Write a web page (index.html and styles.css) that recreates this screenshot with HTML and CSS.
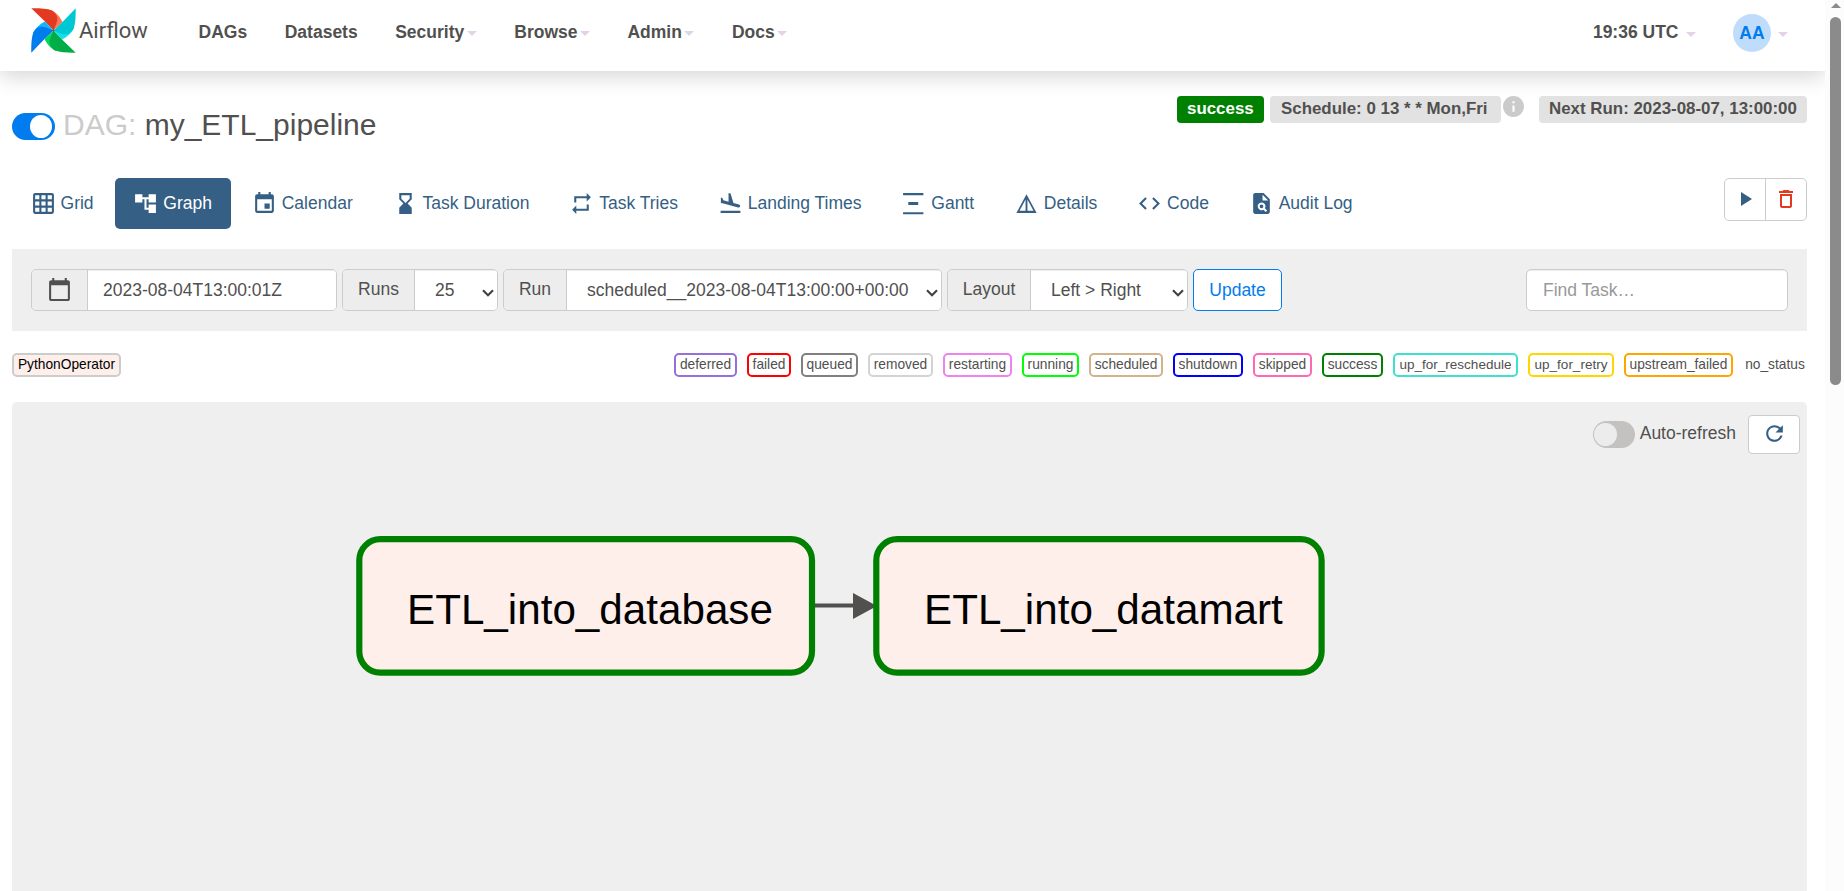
FILE: index.html
```html
<!DOCTYPE html>
<html lang="en">
<head>
<meta charset="utf-8">
<title>my_ETL_pipeline - Graph - Airflow</title>
<link rel="stylesheet" href="styles.css">
</head>
<body>
<div class="page">
<header class="navbar">
  <a class="brand">
    <svg class="brand-logo" viewBox="0 0 45 45">
      <g><path fill="#ff7557" d="M20 2C26 5 29 9 31.500 14L22.500 22.500z"/><path fill="#e43921" d="M.3.300C8 .2 16 .5 21 2.500 26 6 27.500 10 25.500 15c-1 3-2 5-3 7.500L14 13.500z"/></g>
      <g transform="rotate(90 22.500 22.500)"><path fill="#11e1ee" d="M20 2C26 5 29 9 31.500 14L22.500 22.500z"/><path fill="#00c7d4" d="M.3.300C8 .2 16 .5 21 2.500 26 6 27.500 10 25.500 15c-1 3-2 5-3 7.500L14 13.500z"/></g>
      <g transform="rotate(180 22.500 22.500)"><path fill="#04d659" d="M20 2C26 5 29 9 31.500 14L22.500 22.500z"/><path fill="#00ad46" d="M.3.300C8 .2 16 .5 21 2.500 26 6 27.500 10 25.500 15c-1 3-2 5-3 7.500L14 13.500z"/></g>
      <g transform="rotate(270 22.500 22.500)"><path fill="#11b5ff" d="M20 2C26 5 29 9 31.500 14L22.500 22.500z"/><path fill="#017cee" d="M.3.300C8 .2 16 .5 21 2.500 26 6 27.500 10 25.500 15c-1 3-2 5-3 7.500L14 13.500z"/></g>
      <circle cx="22.500" cy="22.500" r=".9" fill="#51504f"/>
    </svg>
    <span class="brand-name">Airflow</span>
  </a>
  <nav class="menu">
    <a>DAGs</a><a>Datasets</a><a>Security<i class="caret"></i></a><a>Browse<i class="caret"></i></a><a>Admin<i class="caret"></i></a><a>Docs<i class="caret"></i></a>
  </nav>
  <div class="account">
    <span class="clock">19:36 UTC<i class="caret"></i></span>
    <span class="avatar">AA</span><i class="caret"></i>
  </div>
</header>

<main class="content">
  <section class="heading">
    <h3 class="title"><span class="switch on"></span><span class="muted">DAG:</span> my_ETL_pipeline</h3>
    <div class="labels">
      <span class="label ok">success</span>
      <span class="label schedule">Schedule: 0 13 * * Mon,Fri</span>
      <svg class="info" viewBox="2 2 20 20"><path d="M12 2C6.480 2 2 6.480 2 12s4.480 10 10 10 10-4.480 10-10S17.520 2 12 2zm1 15h-2v-6h2v6zm0-8h-2V7h2v2z"/></svg>
      <span class="label next">Next Run: 2023-08-07, 13:00:00</span>
    </div>
  </section>

  <section class="tabs-row">
    <ul class="tabs">
      <li><svg viewBox="0 0 24 24"><path d="M20 2H4c-1.100 0-2 .9-2 2v16c0 1.100.9 2 2 2h16c1.100 0 2-.9 2-2V4c0-1.100-.9-2-2-2zM8 20H4v-4h4v4zm0-6H4v-4h4v4zm0-6H4V4h4v4zm6 12h-4v-4h4v4zm0-6h-4v-4h4v4zm0-6h-4V4h4v4zm6 12h-4v-4h4v4zm0-6h-4v-4h4v4zm0-6h-4V4h4v4z"/></svg>Grid</li>
      <li class="active"><svg viewBox="0 0 24 24"><path d="M22 11V3h-7v3H9V3H2v8h7V8h2v10h4v3h7v-8h-7v3h-2V8h2v3z"/></svg>Graph</li>
      <li><svg viewBox="0 0 24 24"><path d="M17 12h-5v5h5v-5zM16 1v2H8V1H6v2H5c-1.110 0-1.990.9-1.990 2L3 19c0 1.100.89 2 2 2h14c1.100 0 2-.9 2-2V5c0-1.100-.9-2-2-2h-1V1h-2zm3 18H5V8h14v11z"/></svg>Calendar</li>
      <li><svg viewBox="0 0 24 24"><path d="M18 22 17.990 16 14 12l3.990-4.010L18 2H6v6l4 4-4 3.990V22h12zM8 7.500V4h8v3.500l-4 4-4-4z"/></svg>Task Duration</li>
      <li><svg viewBox="0 0 24 24"><path d="M7 7h10v3l4-4-4-4v3H5v6h2V7zm10 10H7v-3l-4 4 4 4v-3h12v-6h-2v4z"/></svg>Task Tries</li>
      <li><svg viewBox="0 0 24 24"><path d="M2.500 19h19v2h-19zm7.180-5.730 4.350 1.160 5.310 1.420c.8.210 1.620-.26 1.840-1.060.21-.8-.26-1.620-1.060-1.840l-5.310-1.420-2.760-9.020L10.120 2v8.280L5.150 8.950l-.93-2.320-1.450-.39v5.170l1.600.43 5.310 1.430z"/></svg>Landing Times</li>
      <li><svg viewBox="0 0 24 24"><path d="M2 2h19.500v2H2zM7 10.500h9.500v3H7zM2 20.300h19.500v2H2z"/></svg>Gantt</li>
      <li><svg viewBox="0 0 24 24"><path fill-rule="evenodd" d="M12 3 2.300 21h19.400zm-.9 5.200V19H5.300zm1.800 0L18.700 19h-5.800z"/></svg>Details</li>
      <li><svg viewBox="0 0 24 24"><path d="M9.400 16.600 4.800 12l4.600-4.600L8 6l-6 6 6 6 1.400-1.400zm5.200 0 4.600-4.600-4.600-4.600L16 6l6 6-6 6-1.400-1.400z"/></svg>Code</li>
      <li><svg viewBox="0 0 24 24"><path fill-rule="evenodd" d="M14 2H6c-1.100 0-2 .9-2 2v16c0 1.100.9 2 2 2h12c1.100 0 2-.9 2-2V8zM13 9V3.500L18.500 9zM12 11a3.700 3.700 0 1 0 1.900 6.900l2.200 2.200 1.300-1.300-2.100-2.200A3.700 3.700 0 0 0 12 11zm0 1.900a1.800 1.800 0 1 1 0 3.600 1.800 1.800 0 0 1 0-3.600z"/></svg>Audit Log</li>
    </ul>
    <div class="actions">
      <span class="action run"><svg viewBox="0 0 24 24"><path d="M8 5v14l11-7z"/></svg></span>
      <span class="action delete"><svg viewBox="0 0 24 24"><path d="M6 19c0 1.100.9 2 2 2h8c1.100 0 2-.9 2-2V7H6v12zM8 9h8v10H8V9zm7.500-5-1-1h-5l-1 1H5v2h14V4z"/></svg></span>
    </div>
  </section>

  <section class="filters">
    <div class="group date"><span class="addon"><svg viewBox="0 0 24 24"><path d="M20 3h-1V1h-2v2H7V1H5v2H4c-1.100 0-2 .9-2 2v16c0 1.100.9 2 2 2h16c1.100 0 2-.9 2-2V5c0-1.100-.9-2-2-2zm0 18H4V8h16v13z"/></svg></span><span class="field">2023-08-04T13:00:01Z</span></div>
    <div class="group runs"><span class="addon">Runs</span><span class="field select">25<svg viewBox="0 0 12 8"><path d="m1 1.300 5 5 5-5"/></svg></span></div>
    <div class="group run-id"><span class="addon">Run</span><span class="field select">scheduled__2023-08-04T13:00:00+00:00<svg viewBox="0 0 12 8"><path d="m1 1.300 5 5 5-5"/></svg></span></div>
    <div class="group layout"><span class="addon">Layout</span><span class="field select">Left &gt; Right<svg viewBox="0 0 12 8"><path d="m1 1.300 5 5 5-5"/></svg></span></div>
    <span class="update">Update</span>
    <span class="search">Find Task…</span>
  </section>

  <section class="legend">
    <span class="chip operator">PythonOperator</span>
    <div class="states">
      <span class="chip deferred">deferred</span><span class="chip failed">failed</span><span class="chip queued">queued</span><span class="chip removed">removed</span><span class="chip restarting">restarting</span><span class="chip running">running</span><span class="chip scheduled">scheduled</span><span class="chip shutdown">shutdown</span><span class="chip skipped">skipped</span><span class="chip success">success</span><span class="chip reschedule">up_for_reschedule</span><span class="chip retry">up_for_retry</span><span class="chip upstream">upstream_failed</span><span class="chip none">no_status</span>
    </div>
  </section>

  <section class="graph">
    <div class="refresh">
      <span class="switch"></span><span class="refresh-text">Auto-refresh</span>
      <span class="refresh-button"><svg viewBox="0 0 24 24"><path d="M17.650 6.350C16.200 4.900 14.210 4 12 4c-4.420 0-7.990 3.580-7.990 8s3.570 8 7.990 8c3.730 0 6.840-2.550 7.730-6h-2.080c-.82 2.330-3.040 4-5.650 4-3.310 0-6-2.690-6-6s2.690-6 6-6c1.660 0 3.140.69 4.220 1.780L13 11h7V4l-2.350 2.350z"/></svg></span>
    </div>
    <svg class="canvas" viewBox="12 402 1795 489">
      <path class="edge" d="M815 605.500H856"/>
      <path class="arrow" d="M853 593v26l24-13z"/>
      <rect class="node" x="359.300" y="539.200" width="452.700" height="133.400" rx="21"/>
      <text class="node-text" x="407" y="624">ETL_into_database</text>
      <rect class="node" x="876.300" y="539.200" width="445.300" height="133.400" rx="21"/>
      <text class="node-text" x="924" y="624">ETL_into_datamart</text>
    </svg>
  </section>
</main>
</div>
<aside class="scrollbar"><i class="up"></i><i class="thumb"></i></aside>
</body>
</html>
```
FILE: styles.css
```css
* { box-sizing: border-box; }
body {
  margin: 0;
  height: 891px;
  overflow: hidden;
  display: flex;
  background: #fff;
  color: #51504f;
  font: 17.5px/25px "Liberation Sans", Arial, sans-serif;
}
.page { width: 1825px; height: 891px; overflow: hidden; }
svg { display: block; fill: currentColor; flex: none; }

.navbar {
  height: 71px;
  display: flex;
  align-items: flex-start;
  padding: 8px 37px 0 31px;
  box-shadow: 0 6px 20px rgba(0, 0, 0, .16);
  font-weight: 700;
}
.brand { width: 167.600px; display: flex; gap: 3px; }
.brand-logo { width: 45px; height: 45px; }
.brand-name { font: 400 22px/25px Roboto, sans-serif; margin-top: 10px; }
.menu { display: flex; gap: 37.500px; margin-top: 11.500px; }
.menu a, .clock { display: flex; align-items: center; }
.caret {
  border: 5px solid transparent;
  border-top-color: #e3d3e6;
  border-bottom: 0;
  margin: 3px 0 0 2.500px;
}
.account { margin-left: auto; display: flex; align-items: center; height: 50px; }
.clock { margin-top: -1px; margin-right: 37px; }
.clock .caret { margin-left: 7.500px; }
.avatar {
  width: 38px; height: 38px;
  border-radius: 50%;
  background: #bfddfb;
  color: #017cee;
  display: grid;
  place-items: center;
}
.avatar + .caret { margin-left: 7px; }

.content { padding: 0 18px 0 12px; }
.heading { height: 107px; display: flex; justify-content: space-between; padding-top: 25px; }
.title {
  margin: 0;
  padding-top: 10px;
  height: 48px;
  display: flex;
  align-items: center;
  font-size: 30px;
  font-weight: 400;
  line-height: 36px;
  gap: 8.300px;
}
.muted { color: #cbcbcb; }
.switch {
  width: 43px; height: 27px;
  border-radius: 14px;
  background: #c4c2c1;
  padding: 2px;
  display: flex;
}
.switch::before { content: ""; width: 23px; height: 23px; border-radius: 50%; background: #edecec; }
.switch.on { background: #017cee; justify-content: flex-end; margin-top: 3px; margin-right: -.3px; padding-right: 3px; }
.switch.on::before { background: #fff; width: 22px; }
.labels { display: flex; align-items: flex-start; }
.label {
  height: 27px;
  border-radius: 4px;
  background: #e2e2e2;
  font-weight: 700;
  font-size: 16.900px;
  padding-left: 10px;
}
.label.ok { width: 87px; background: #008000; color: #fff; margin-right: 6px; }
.label.schedule { width: 231px; margin-right: 2px; padding-left: 11px; }
.label.next { width: 268px; }
.info { width: 21px; height: 21px; color: #cbcbcb; margin-right: 15px; }

.tabs-row { height: 71px; display: flex; justify-content: space-between; align-items: flex-start; color: #355f84; }
.tabs { list-style: none; margin: 0; padding: 0; display: flex; gap: 2.500px; }
.tabs li {
  height: 51px;
  padding: 0 18.700px;
  display: flex;
  align-items: center;
  gap: 4.860px;
  border-radius: 5px;
  white-space: nowrap;
}
.tabs svg { width: 25px; height: 25px; margin-top: -1px; }
.tabs .active { background: #355f84; color: #fff; }
.actions { display: flex; border: 1px solid #ccc; border-radius: 5px; width: 83px; height: 43px; }
.action { flex: 1; display: grid; place-items: center; }
.action svg { width: 24px; height: 24px; margin-top: -1px; }
.delete { border-left: 1px solid #ccc; color: #e43921; }

.filters {
  height: 82px;
  background: #efefef;
  padding: 20px 19px 0;
  display: flex;
  gap: 5px;
}
.group { display: flex; height: 42px; border: 1px solid #ccc; border-radius: 5px; overflow: hidden; }
.addon { padding-top: 7px; text-align: center; background: #ededed; border-right: 1px solid #ccc; flex: none; }
.addon svg { width: 25px; height: 25px; margin: 0 auto; }
.field { flex: 1; background: #fff; padding: 8px 0 0 15px; white-space: nowrap; box-shadow: inset 0 1px 1px rgba(0, 0, 0, .075); }
.select { display: flex; justify-content: space-between; padding: 8px 3px 0 20px; }
.select svg { width: 12px; height: 8px; margin-top: 10.500px; fill: none; stroke: #444; stroke-width: 2.200; }
.date { width: 306px; }
.date .addon { width: 56px; }
.runs { width: 156px; }
.runs .addon { width: 72px; }
.run-id { width: 439px; }
.run-id .addon { width: 63px; }
.layout { width: 241px; }
.layout .addon { width: 83px; }
.layout .select { padding-left: 20px; }
.update, .search { height: 42px; border-radius: 5px; border: 1px solid #ccc; background: #fff; padding-top: 8px; }
.update { width: 89px; border-color: #017cee; color: #017cee; text-align: center; }
.search { margin-left: auto; width: 262px; padding-left: 16px; color: #999; box-shadow: inset 0 1px 1px rgba(0, 0, 0, .075); }

.legend { height: 71px; padding-top: 22px; display: flex; justify-content: space-between; }
.states { display: flex; gap: 10px; }
.chip {
  height: 24px;
  border: 2px solid #fff;
  border-radius: 5px;
  font-size: 13.750px;
  line-height: 19px;
  display: flex;
  justify-content: center;
  white-space: nowrap;
}
.operator { width: 109px; background: #ffefeb; border-color: #ccc; color: #000; }
.deferred { width: 63px; border-color: mediumpurple; }
.failed { width: 44px; border-color: red; }
.queued { width: 57px; border-color: gray; }
.removed { width: 65px; border-color: lightgrey; }
.restarting { width: 69px; border-color: violet; }
.running { width: 57px; border-color: lime; }
.scheduled { width: 74px; border-color: tan; }
.shutdown { width: 70px; border-color: blue; }
.skipped { width: 59px; border-color: hotpink; }
.success { width: 61px; border-color: green; }
.reschedule { width: 125px; border-color: turquoise; font-size: 13.500px; }
.retry { width: 86px; border-color: gold; font-size: 13.500px; }
.upstream { width: 109px; border-color: orange; }
.none { width: 64px; }

.graph { height: 489px; background: #efefef; border-radius: 5px 5px 0 0; position: relative; }
.refresh { position: absolute; right: 7px; top: 13px; display: flex; align-items: center; }
.refresh .switch { width: 42px; margin-top: -1px; margin-right: 5px; padding-left: 1.500px; }
.refresh-text { margin-top: -3px; margin-right: 12px; }
.refresh-button {
  width: 52px; height: 39px;
  border: 1px solid #ccc;
  border-radius: 4px;
  background: #fff;
  color: #355f84;
  display: grid;
  place-items: center;
}
.refresh-button svg { width: 25px; height: 25px; margin-top: -2px; }
.canvas { width: 1795px; height: 489px; }
.node { fill: #ffefeb; stroke: #008000; stroke-width: 6.200; }
.node-text { fill: #000; font-size: 42.200px; }
.edge { stroke: #51504f; stroke-width: 4.200; }
.arrow { fill: #51504f; }

.scrollbar { width: 19px; background: #fcfcfc; display: flex; flex-direction: column; align-items: center; padding: 3px 0 0 2px; }
.up { border: 5px solid transparent; border-top: 0; border-bottom: 5px solid #8b8b8b; }
.thumb { width: 11px; height: 368px; margin-top: 9px; border-radius: 6px; background: #8b8b8b; }
```
